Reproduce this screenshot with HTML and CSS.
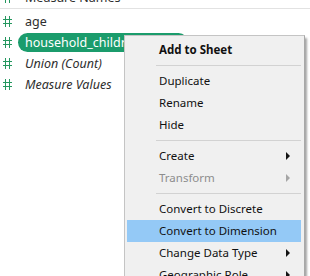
FILE: index.html
```html
<!DOCTYPE html>
<html>
<head>
<meta charset="utf-8">
<link rel="stylesheet" href="styles.css">
</head>
<body>
<div class="panel">
  <div class="section dims">
    <div class="row"><span class="hash"><svg width="9" height="11" viewBox="0 0 9 11"><path d="M2.5 0V11M6.5 0V11M0 3.5H9M0 7.5H9" stroke="#25975f" stroke-width="1" fill="none"/></svg></span><span class="name">Measure Names</span></div>
  </div>
  <div class="section measures">
    <div class="row"><span class="hash"><svg width="9" height="11" viewBox="0 0 9 11"><path d="M2.5 0V11M6.5 0V11M0 3.5H9M0 7.5H9" stroke="#25975f" stroke-width="1" fill="none"/></svg></span><span class="name">age</span></div>
    <div class="row"><span class="hash"><svg width="9" height="11" viewBox="0 0 9 11"><path d="M2.5 0V11M6.5 0V11M0 3.5H9M0 7.5H9" stroke="#25975f" stroke-width="1" fill="none"/></svg></span><span class="name pill">household_children</span></div>
    <div class="row"><span class="hash"><svg width="9" height="11" viewBox="0 0 9 11"><path d="M2.5 0V11M6.5 0V11M0 3.5H9M0 7.5H9" stroke="#25975f" stroke-width="1" fill="none"/></svg></span><span class="name italic">Union (Count)</span></div>
    <div class="row"><span class="hash"><svg width="9" height="11" viewBox="0 0 9 11"><path d="M2.5 0V11M6.5 0V11M0 3.5H9M0 7.5H9" stroke="#25975f" stroke-width="1" fill="none"/></svg></span><span class="name italic">Measure Values</span></div>
  </div>
</div>
<div class="menu">
  <div class="item bold">Add to Sheet</div>
  <div class="sep"></div>
  <div class="item">Duplicate</div>
  <div class="item">Rename</div>
  <div class="item">Hide</div>
  <div class="sep"></div>
  <div class="item sub">Create</div>
  <div class="item sub disabled">Transform</div>
  <div class="sep"></div>
  <div class="item">Convert to Discrete</div>
  <div class="item active">Convert to Dimension</div>
  <div class="item sub">Change Data Type</div>
  <div class="item sub">Geographic Role</div>
</div>
</body>
</html>
```
FILE: styles.css
```css
html, body {
  margin: 0;
  padding: 0;
  background: #ffffff;
  overflow: hidden;
  width: 310px;
  height: 276px;
}
body {
  position: relative;
  font-family: "Segoe UI", "Noto Sans", "Open Sans", sans-serif;
}
.panel {
  width: 310px;
}
.section.dims {
  margin-top: -13px;
  border-bottom: 1px solid #e2e2e2;
}
.section.measures {
  padding-top: 2px;
}
.row {
  height: 21px;
  display: flex;
  align-items: center;
  font-size: 12.5px;
  color: #2e2e2e;
}
.hash {
  width: 25px;
  padding-left: 3px;
  box-sizing: border-box;
  display: flex;
  align-items: center;
}
.name {
  white-space: nowrap;
}
.italic {
  font-style: italic;
}
.pill {
  background: #1b9c6c;
  color: #ffffff;
  height: 19px;
  line-height: 19px;
  border-radius: 10px;
  margin-left: -7px;
  padding: 0 48px 0 7px;
}
.menu {
  position: absolute;
  left: 124px;
  top: 35px;
  width: 174px;
  background: #f0f0f0;
  border: 1px solid #c4c4c4;
  border-right-color: #a8a8a8;
  padding: 3px 3px 4px 2px;
  box-shadow: 2px 3px 2px rgba(0, 0, 0, 0.35);
  font-size: 11.5px;
  color: #111111;
}
.item {
  height: 22px;
  line-height: 22px;
  padding-left: 32px;
  position: relative;
  white-space: nowrap;
}
.bold {
  font-weight: bold;
}
.disabled {
  color: #8d8d8d;
}
.active {
  background: #94c9f6;
}
.sub::after {
  content: "";
  position: absolute;
  right: 11px;
  top: 7px;
  border-left: 4px solid #141414;
  border-top: 4px solid transparent;
  border-bottom: 4px solid transparent;
}
.disabled.sub::after {
  border-left-color: #a5a5a5;
}
.sep {
  height: 9px;
  display: flex;
  align-items: center;
  padding-left: 29px;
}
.sep::before {
  content: "";
  flex: 1;
  height: 1px;
  background: #d2d2d2;
}
```
